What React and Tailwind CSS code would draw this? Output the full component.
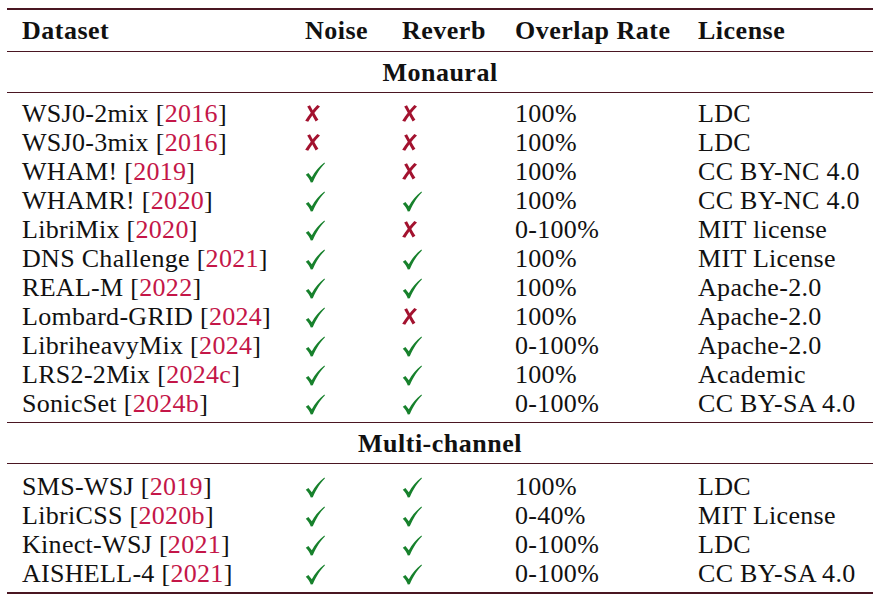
import React from "react";

const Y = true;
const N = false;

const monaural = [
	["WSJ0-2mix", "2016", N, N, "100%", "LDC"],
	["WSJ0-3mix", "2016", N, N, "100%", "LDC"],
	["WHAM!", "2019", Y, N, "100%", "CC BY-NC 4.0"],
	["WHAMR!", "2020", Y, Y, "100%", "CC BY-NC 4.0"],
	["LibriMix", "2020", Y, N, "0-100%", "MIT license"],
	["DNS Challenge", "2021", Y, Y, "100%", "MIT License"],
	["REAL-M", "2022", Y, Y, "100%", "Apache-2.0"],
	["Lombard-GRID", "2024", Y, N, "100%", "Apache-2.0"],
	["LibriheavyMix", "2024", Y, Y, "0-100%", "Apache-2.0"],
	["LRS2-2Mix", "2024c", Y, Y, "100%", "Academic"],
	["SonicSet", "2024b", Y, Y, "0-100%", "CC BY-SA 4.0"],
];

const multi = [
	["SMS-WSJ", "2019", Y, Y, "100%", "LDC"],
	["LibriCSS", "2020b", Y, Y, "0-40%", "MIT License"],
	["Kinect-WSJ", "2021", Y, Y, "0-100%", "LDC"],
	["AISHELL-4", "2021", Y, Y, "0-100%", "CC BY-SA 4.0"],
];

const cols = "grid grid-cols-[283px_97px_113px_183px_1fr]";

// pifont-style check / cross
const Mark = ({ ok }) =>
	ok ? (
		<svg width="20" height="21" viewBox="0 0 20 21" className="block mt-[1px]">
			<path
				d="M0.8 12.8 L3.4 11 L6.8 15.2 C10 9.4 14 4.8 19.4 0.6 L19.9 1.4 C15.2 6 11.4 11.8 7.8 20.3 L5.8 20.5 C4.6 17.6 3 15 0.8 12.8 Z"
				fill="#17812c"
			/>
		</svg>
	) : (
		<svg width="15" height="17" viewBox="0 0 15 17" className="block">
			<path d="M2.2 1.4 L5 0.3 C7.6 5 10.4 10.4 13.4 14.8 L10.6 16.4 C8 11.6 5 6.4 2.2 1.4 Z" fill="#a3122f" />
			<path d="M12.4 0 L15 1.4 C10.6 5.8 6.4 11.2 3.2 16.8 L0.2 15.8 C3.8 10 8 4.6 12.4 0 Z" fill="#a3122f" />
		</svg>
	);

const Row = ({ r }) => (
	<div className={`${cols} h-[29px] items-center`}>
		<div>
			{r[0]} [<span className="text-[#c41648]">{r[1]}</span>]
		</div>
		<div><Mark ok={r[2]} /></div>
		<div><Mark ok={r[3]} /></div>
		<div>{r[4]}</div>
		<div>{r[5]}</div>
	</div>
);

const App = () => {
	return (
		<div className="w-[882px] h-[602px] bg-white pt-[8px] font-['Liberation_Serif',serif] text-[26px] tracking-[0.3px] text-[#111]">
			<div className="mx-[7px] w-[866px]">
				<div className="h-[2px] bg-[#4a1622]"></div>
				<div className={`${cols} pl-[15px] h-[41px] items-center font-bold tracking-[0.5px]`}>
					<div>Dataset</div>
					<div>Noise</div>
					<div>Reverb</div>
					<div>Overlap Rate</div>
					<div>License</div>
				</div>
				<div className="h-[1px] bg-[#4a1622]"></div>
				<div className="h-[40px] flex items-center justify-center font-bold tracking-[0.5px]">Monaural</div>
				<div className="h-[1px] bg-[#4a1622]"></div>
				<div className="pl-[15px] pt-[1px] pb-[9px]">
					{monaural.map((r) => (
						<Row key={r[0]} r={r} />
					))}
				</div>
				<div className="h-[1px] bg-[#4a1622]"></div>
				<div className="h-[40px] flex items-center justify-center font-bold tracking-[0.5px]">Multi-channel</div>
				<div className="h-[1px] bg-[#4a1622]"></div>
				<div className="pl-[15px] pt-[3px] pb-[9px]">
					{multi.map((r) => (
						<Row key={r[0]} r={r} />
					))}
				</div>
				<div className="h-[2px] bg-[#4a1622]"></div>
			</div>
		</div>
	);
};

export default App;
